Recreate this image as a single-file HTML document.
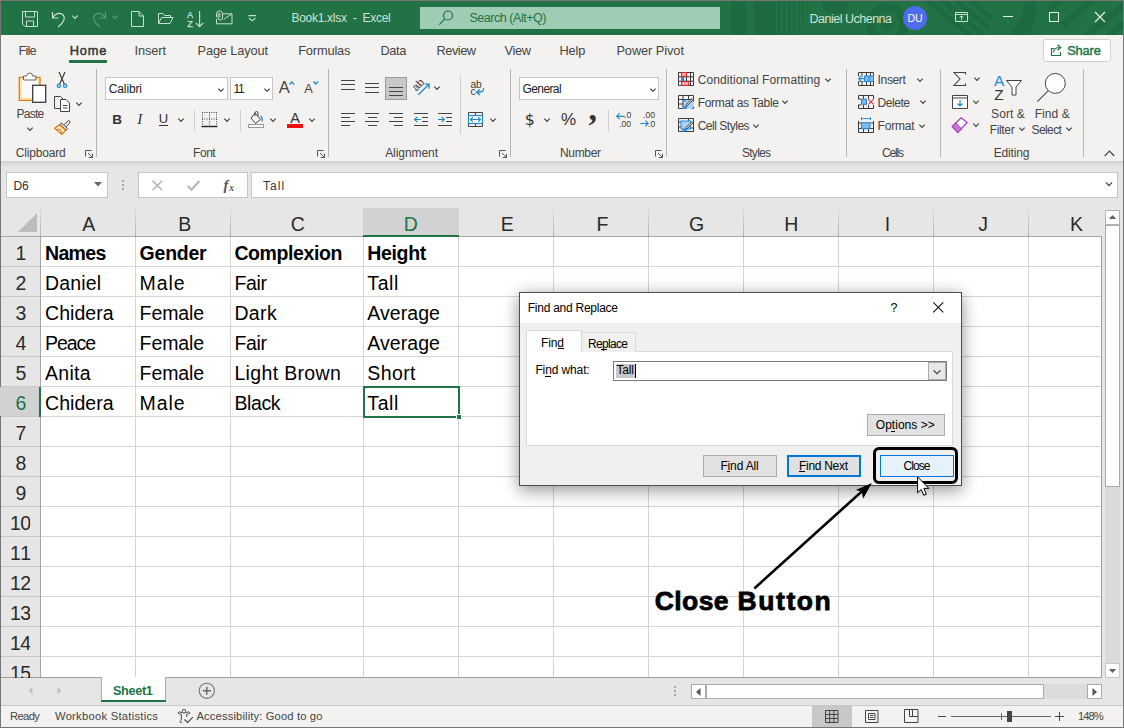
<!DOCTYPE html>
<html lang="en"><head><meta charset="utf-8"><title>Book1.xlsx - Excel</title>
<style>
html,body{margin:0;padding:0;}
body{width:1124px;height:728px;overflow:hidden;position:relative;background:#fff;font-family:"Liberation Sans",sans-serif;}
#app{position:absolute;left:0;top:0;width:1124px;height:728px;overflow:hidden;}
#app div,#app span.t,#app svg.i{position:absolute;box-sizing:border-box;}
span.t{white-space:pre;}
svg.i{overflow:visible;}
#app div.sec{left:0;top:0;width:1124px;height:728px;}
</style></head><body><div id="app">
<div class="sec" id="base-backgrounds">
<div style="left:0px;top:0px;width:1124px;height:728px;background:#e6e6e6;"></div>
<div style="left:0px;top:0px;width:1124px;height:35px;background:#217346;"></div>
<svg class="i" style="left:720px;top:1px;" width="403" height="34" viewBox="0 0 403 34"><defs><clipPath id="tbc"><rect x="0" y="0" width="403" height="34"/></clipPath></defs>
<g clip-path="url(#tbc)" fill="#1e6a40">
<path d="M11 0 h15 v34 h-8 a7 7 0 0 1 -7 -7z M34 0 h22 v34 h-22z"/>
<path d="M58 0 h2.500 v34 h-2.500z M63 0 h2.500 v34 h-2.500z M68 0 h2.200 v34 h-2.200z M73 0 h2 v34 h-2z M78 0 h1.800 v30 h-1.800z M82.500 0 h1.500 v24 h-1.500z M86.500 0 h1.200 v17 h-1.200z M90 0 h1 v10 h-1z"/>
<circle cx="115" cy="0" r="13.600"/>
<circle cx="167.500" cy="22.600" r="16.800" fill="none" stroke="#1e6a40" stroke-width="8.400"/>
<circle cx="167.500" cy="22.600" r="7"/>
<path d="M205 0 l40 34 h8 l-40 -34z M219 0 l40 34 h8 l-40 -34z M233 0 l34 29 l3 -4 l-29 -25z M247 0 l24 20 l2 -5 l-18 -15z"/>
<path d="M305 0 h11 c2 12 -1 24 -7 34 h-20 c9 -9 15 -21 16 -34z"/>
<path d="M326 6 l8 -6 h10 l-13 11z M340 22 l26 -22 h9 l-30 27z M362 34 l41 -33 v8 l-31 25z M385 34 l18 -15 v8 l-8 7z"/>
</g></svg>
<div style="left:0px;top:0px;width:1124px;height:1px;background:#767676;"></div>
<div style="left:0px;top:0px;width:1px;height:728px;background:#767676;"></div>
<div style="left:1123px;top:0px;width:1px;height:728px;background:#767676;"></div>
<div style="left:1px;top:35px;width:1122px;height:126px;background:#f3f2f1;"></div>
<div style="left:1px;top:161px;width:1122px;height:7px;background:linear-gradient(#d0d0d0,#dedede 50%,#e6e6e6);"></div>
</div>
<div class="sec" id="title-bar-content">
<svg class="i" style="left:22px;top:11px;" width="16" height="16" viewBox="0 0 16 16"><path d="M.5 .5 h15 v15 h-12.500 l-2.500-2.500z M3.500 .5 v5.500 h9 v-5.500 M4.500 15.500 v-5.500 h7 v5.500" fill="none" stroke="#c9dfd2" stroke-width="1"/></svg>
<svg class="i" style="left:51px;top:10px;" width="16" height="18" viewBox="0 0 16 18"><path d="M1.5 2 v6 h6 M1.5 8 c2.5-4.5 7-6 10-3.5 c3.5 3 1.5 8 -4.5 12.500" fill="none" stroke="#c9dfd2" stroke-width="1.2"/></svg>
<svg class="i" style="left:70px;top:13px;" width="10" height="8" viewBox="0 0 10 8"><path d="M2.3 2.6 L5 5.4 L7.7 2.6" fill="none" stroke="#c9dfd2" stroke-width="1.2"/></svg>
<svg class="i" style="left:91px;top:10px;" width="16" height="18" viewBox="0 0 16 18"><path d="M14.500 2 v6 h-6 M14.500 8 c-2.500-4.500 -7-6 -10-3.500 c-3.500 3 -1.500 8 4.500 12.500" fill="none" stroke="#5d9a78" stroke-width="1.200"/></svg>
<svg class="i" style="left:110px;top:13px;" width="10" height="8" viewBox="0 0 10 8"><path d="M2.3 2.6 L5 5.4 L7.7 2.6" fill="none" stroke="#5d9a78" stroke-width="1.2"/></svg>
<svg class="i" style="left:131px;top:11px;" width="13" height="16" viewBox="0 0 13 16"><path d="M.5 .5 h7.500 l4.500 4.500 v10.500 h-12z M8 .5 v4.500 h4.500" fill="none" stroke="#c9dfd2" stroke-width="1"/></svg>
<svg class="i" style="left:158px;top:13px;" width="16" height="12" viewBox="0 0 16 12"><path d="M.5 10.500 v-10 h4.500 l1.500 2 h6 v2.500 M.5 10.500 l3-6 h11.500 l-3 6z" fill="none" stroke="#c9dfd2" stroke-width="1"/></svg>
<span class="t" style="left:187.00px;top:8.80px;font-size:9.3px;line-height:12px;letter-spacing:0.000px;color:#c9dfd2;-webkit-text-stroke:.25px #c9dfd2;">A</span>
<span class="t" style="left:187.30px;top:17.80px;font-size:9.3px;line-height:12px;letter-spacing:0.000px;color:#c9dfd2;-webkit-text-stroke:.25px #c9dfd2;">Z</span>
<svg class="i" style="left:195px;top:11px;" width="9" height="16" viewBox="0 0 9 16"><path d="M4.600 0 v15.500 M1 12 l3.600 3.600 l3.600-3.600" fill="none" stroke="#c9dfd2" stroke-width="1.100"/></svg>
<svg class="i" style="left:215px;top:10px;" width="18" height="15" viewBox="0 0 18 15"><path d="M8 3.800 h9 v10 h-15.500 v-5" fill="none" stroke="#c9dfd2" stroke-width="1"/><path d="M8.800 9.300 L17 3.800" fill="none" stroke="#c9dfd2" stroke-width="1"/><path d="M1.500 7 v-3.200 a3 3 0 0 1 6 0 v4 a2.200 2.200 0 0 1 -4.400 0 v-3.800 a.9 .9 0 0 1 1.800 0 v3.500" fill="none" stroke="#c9dfd2" stroke-width="1"/></svg>
<svg class="i" style="left:248px;top:15px;" width="9" height="7" viewBox="0 0 9 7"><path d="M.5 .6 h7.500 M1 3 l3.200 2.800 l3.200-2.800" fill="none" stroke="#c9dfd2" stroke-width="1.100"/></svg>
<span class="t" style="left:291.50px;top:10.10px;font-size:12px;line-height:16px;letter-spacing:-0.290px;color:#cfe2d6;">Book1.xlsx  -  Excel</span>
<div style="left:420px;top:7px;width:300px;height:22px;background:#9fcdb3;"></div>
<svg class="i" style="left:439px;top:11px;" width="14" height="14" viewBox="0 0 14 14"><circle cx="9" cy="4.500" r="4.500" fill="none" stroke="#217346" stroke-width="1.200"/><path d="M5.800 7.800 L.3 13.600" stroke="#217346" stroke-width="1.200"/></svg>
<span class="t" style="left:469.50px;top:9.80px;font-size:12.5px;line-height:16px;letter-spacing:-0.463px;color:#217346;">Search (Alt+Q)</span>
<span class="t" style="left:809.50px;top:11.10px;font-size:12.5px;line-height:16px;letter-spacing:-0.496px;color:#cfe2d6;">Daniel Uchenna</span>
<div style="left:903px;top:6px;width:24px;height:24px;background:#4f6bed;border-radius:50%;"></div>
<span class="t" style="left:907.50px;top:11.00px;font-size:10.5px;line-height:14px;letter-spacing:-0.166px;color:#fff;">DU</span>
<svg class="i" style="left:955px;top:12px;" width="13" height="10" viewBox="0 0 13 10"><path d="M.5 .5 h12 v9 h-12z M.5 2.500 h12" fill="none" stroke="#c9dfd2" stroke-width="1"/><path d="M6.500 8 v-4 M4.500 5.700 l2-2 l2 2" fill="none" stroke="#c9dfd2" stroke-width="1"/></svg>
<div style="left:1003px;top:16px;width:10px;height:1px;background:#e4efe8;"></div>
<div style="left:1049px;top:12px;width:10px;height:10px;border:1px solid #e4efe8;"></div>
<svg class="i" style="left:1095px;top:12px;" width="10" height="10" viewBox="0 0 10 10"><path d="M0 0 L10 10 M10 0 L0 10" stroke="#e4efe8" stroke-width="1.100"/></svg>
</div>
<div class="sec" id="tab-row">
<span class="t" style="left:18.50px;top:41.50px;font-size:12.8px;line-height:17px;letter-spacing:-0.875px;color:#444;">File</span>
<span class="t" style="left:134.50px;top:41.50px;font-size:12.8px;line-height:17px;letter-spacing:-0.103px;color:#444;">Insert</span>
<span class="t" style="left:197.50px;top:41.50px;font-size:12.8px;line-height:17px;letter-spacing:-0.138px;color:#444;">Page Layout</span>
<span class="t" style="left:298.20px;top:41.50px;font-size:12.8px;line-height:17px;letter-spacing:-0.149px;color:#444;">Formulas</span>
<span class="t" style="left:380.40px;top:41.50px;font-size:12.8px;line-height:17px;letter-spacing:-0.379px;color:#444;">Data</span>
<span class="t" style="left:436.60px;top:41.50px;font-size:12.8px;line-height:17px;letter-spacing:-0.514px;color:#444;">Review</span>
<span class="t" style="left:504.50px;top:41.50px;font-size:12.8px;line-height:17px;letter-spacing:-0.338px;color:#444;">View</span>
<span class="t" style="left:559.50px;top:41.50px;font-size:12.8px;line-height:17px;letter-spacing:-0.142px;color:#444;">Help</span>
<span class="t" style="left:616.40px;top:41.50px;font-size:12.8px;line-height:17px;letter-spacing:-0.070px;color:#444;">Power Pivot</span>
<span class="t" style="left:69.70px;top:41.50px;font-size:12.8px;line-height:17px;letter-spacing:0.818px;color:#333;-webkit-text-stroke:.45px #333;">Home</span>
<div style="left:69px;top:60px;width:38px;height:3px;background:#217346;"></div>
<div style="left:1043px;top:39px;width:68px;height:23px;background:#fff;border:1px solid #d2d0ce;border-radius:3px;"></div>
<svg class="i" style="left:1051px;top:44px;" width="12" height="12" viewBox="0 0 12 12"><path d="M3.500 4.500 h-3 v7 h9 v-3.500" fill="none" stroke="#217346" stroke-width="1.200"/><path d="M2.500 8.500 c.5-3.500 3-5 6-5 M6.500 .8 l3.300 2.700 l-3.300 2.700" fill="none" stroke="#217346" stroke-width="1.200"/></svg>
<span class="t" style="left:1067.20px;top:41.50px;font-size:12.8px;line-height:17px;letter-spacing:-0.140px;color:#217346;-webkit-text-stroke:.45px #217346;">Share</span>
</div>
<div class="sec" id="ribbon">
<div style="left:96px;top:69px;width:1px;height:88px;background:#b8b6b4;"></div>
<div style="left:328px;top:69px;width:1px;height:88px;background:#b8b6b4;"></div>
<div style="left:510px;top:69px;width:1px;height:88px;background:#b8b6b4;"></div>
<div style="left:666px;top:69px;width:1px;height:88px;background:#b8b6b4;"></div>
<div style="left:846px;top:69px;width:1px;height:88px;background:#b8b6b4;"></div>
<div style="left:940px;top:69px;width:1px;height:88px;background:#b8b6b4;"></div>
<div style="left:1083px;top:69px;width:1px;height:88px;background:#b8b6b4;"></div>
<div style="left:194px;top:110px;width:1px;height:21px;background:#d0cecc;"></div>
<div style="left:240px;top:110px;width:1px;height:21px;background:#d0cecc;"></div>
<div style="left:460px;top:75px;width:1px;height:59px;background:#d0cecc;"></div>
<div style="left:608px;top:110px;width:1px;height:21px;background:#d0cecc;"></div>
<span class="t" style="left:15.70px;top:145.00px;font-size:12px;line-height:16px;letter-spacing:-0.171px;color:#444;">Clipboard</span>
<span class="t" style="left:193.00px;top:145.00px;font-size:12px;line-height:16px;letter-spacing:-0.437px;color:#444;">Font</span>
<span class="t" style="left:385.20px;top:145.00px;font-size:12px;line-height:16px;letter-spacing:-0.070px;color:#444;">Alignment</span>
<span class="t" style="left:560.00px;top:145.00px;font-size:12px;line-height:16px;letter-spacing:-0.336px;color:#444;">Number</span>
<span class="t" style="left:742.00px;top:145.00px;font-size:12px;line-height:16px;letter-spacing:-0.736px;color:#444;">Styles</span>
<span class="t" style="left:882.00px;top:145.00px;font-size:12px;line-height:16px;letter-spacing:-1.168px;color:#444;">Cells</span>
<span class="t" style="left:993.70px;top:145.00px;font-size:12px;line-height:16px;letter-spacing:-0.165px;color:#444;">Editing</span>
<svg class="i" style="left:85px;top:149.5px;" width="8" height="8" viewBox="0 0 8 8"><path d="M.5 6.500 v-6 h6 M3 3 l4.300 4.300 M7.500 3.800 v3.700 h-3.700" fill="none" stroke="#555" stroke-width="1"/></svg>
<svg class="i" style="left:317px;top:149.5px;" width="8" height="8" viewBox="0 0 8 8"><path d="M.5 6.500 v-6 h6 M3 3 l4.300 4.300 M7.500 3.800 v3.700 h-3.700" fill="none" stroke="#555" stroke-width="1"/></svg>
<svg class="i" style="left:499px;top:149.5px;" width="8" height="8" viewBox="0 0 8 8"><path d="M.5 6.500 v-6 h6 M3 3 l4.300 4.300 M7.500 3.800 v3.700 h-3.700" fill="none" stroke="#555" stroke-width="1"/></svg>
<svg class="i" style="left:655px;top:149.5px;" width="8" height="8" viewBox="0 0 8 8"><path d="M.5 6.500 v-6 h6 M3 3 l4.300 4.300 M7.500 3.800 v3.700 h-3.700" fill="none" stroke="#555" stroke-width="1"/></svg>
<svg class="i" style="left:1104px;top:150px;" width="11" height="7" viewBox="0 0 11 7"><path d="M.7 6 l4.800-4.800 l4.800 4.800" fill="none" stroke="#444" stroke-width="1.200"/></svg>
<svg class="i" style="left:18px;top:72px;" width="29" height="32" viewBox="0 0 29 32"><rect x="1.300" y="5.400" width="20.700" height="23" fill="#fafafa"/>
<path d="M3 27 v-19.900 h17.400 v5 M3 26.700 h11" fill="none" stroke="#fbe2a4" stroke-width="1.900"/>
<path d="M14 28.400 h-12.700 v-23 h20.700 v7.500" fill="none" stroke="#e07a10" stroke-width="1.300"/>
<path d="M5.500 8 v-4 h3.200 a3 3 0 0 1 6 0 h3.200 v4z" fill="#fdfdfd" stroke="#6a6a6a" stroke-width="1"/>
<rect x="14.700" y="13.300" width="13" height="17" fill="#fff" stroke="#3b3b3b" stroke-width="1.300"/></svg>
<span class="t" style="left:16.60px;top:106.00px;font-size:12px;line-height:16px;letter-spacing:-0.797px;color:#444;">Paste</span>
<svg class="i" style="left:25px;top:125px;" width="10" height="8" viewBox="0 0 10 8"><path d="M2.3 2.6 L5 5.4 L7.7 2.6" fill="none" stroke="#444" stroke-width="1.2"/></svg>
<svg class="i" style="left:56px;top:72px;" width="12" height="16" viewBox="0 0 12 16"><path d="M3 0 l5.300 12 M9 0 l-5.300 12" stroke="#3b3b3b" stroke-width="1.200" fill="none"/>
<circle cx="2.900" cy="13.800" r="1.600" fill="none" stroke="#1e8bcd" stroke-width="1.300"/><circle cx="9.100" cy="13.800" r="1.600" fill="none" stroke="#1e8bcd" stroke-width="1.300"/></svg>
<svg class="i" style="left:54px;top:96px;" width="17" height="16" viewBox="0 0 17 16"><path d="M6 12.500 h-5.500 v-12 h6 l3 3" fill="none" stroke="#444" stroke-width="1"/><path d="M6.500 3.500 h5.500 l3.500 3.500 v8.500 h-9z" fill="#fff" stroke="#444" stroke-width="1"/><path d="M9 9.500 h4.500 M9 12 h4.500" stroke="#444" stroke-width="1"/></svg>
<svg class="i" style="left:74px;top:100px;" width="10" height="8" viewBox="0 0 10 8"><path d="M2.3 2.6 L5 5.4 L7.7 2.6" fill="none" stroke="#444" stroke-width="1.2"/></svg>
<svg class="i" style="left:54px;top:120px;" width="17" height="15" viewBox="0 0 17 15"><path d="M10.300 4.700 l3.300-3.600 a1.300 1.300 0 0 1 2 1.700 l-3.200 3.700" fill="#f3f2f1" stroke="#3b3b3b" stroke-width="1"/><path d="M7.300 3 l6.300 5.500 l-1.400 1.600 l-6.300-5.500z" fill="#f3f2f1" stroke="#3b3b3b" stroke-width="1"/>
<path d="M5.600 4.900 l-5 3.300 l7.300 6 l3.800-4z" fill="#fdf0dd" stroke="#e07a10" stroke-width="1.300" stroke-linejoin="round"/><path d="M2.500 9.500 l4 -.5 l1.200 4" fill="none" stroke="#e07a10" stroke-width="1"/></svg>
<div style="left:105px;top:77px;width:123px;height:23px;background:#fff;border:1px solid #c8c6c4;"></div>
<span class="t" style="left:108.80px;top:80.90px;font-size:12px;line-height:16px;letter-spacing:-0.135px;color:#222;">Calibri</span>
<svg class="i" style="left:216px;top:86px;" width="10" height="8" viewBox="0 0 10 8"><path d="M2.3 2.6 L5 5.4 L7.7 2.6" fill="none" stroke="#444" stroke-width="1.2"/></svg>
<div style="left:230px;top:77px;width:43px;height:23px;background:#fff;border:1px solid #c8c6c4;"></div>
<span class="t" style="left:233.60px;top:80.90px;font-size:12px;line-height:16px;letter-spacing:0.000px;color:#222;letter-spacing:-1.3px;">11</span>
<svg class="i" style="left:262px;top:86px;" width="10" height="8" viewBox="0 0 10 8"><path d="M2.3 2.6 L5 5.4 L7.7 2.6" fill="none" stroke="#444" stroke-width="1.2"/></svg>
<span class="t" style="left:278.80px;top:76.60px;font-size:16.5px;line-height:20px;letter-spacing:0.000px;color:#444;">A</span>
<svg class="i" style="left:289px;top:80.5px;" width="6" height="4" viewBox="0 0 6 4"><path d="M.5 3.500 l2.300-2.500 l2.300 2.500" fill="none" stroke="#1e8bcd" stroke-width="1.200"/></svg>
<span class="t" style="left:304.30px;top:80.60px;font-size:12.7px;line-height:16px;letter-spacing:0.000px;color:#444;">A</span>
<svg class="i" style="left:313px;top:80.5px;" width="6" height="4" viewBox="0 0 6 4"><path d="M.5 .5 l2.300 2.500 l2.300-2.500" fill="none" stroke="#1e8bcd" stroke-width="1.200"/></svg>
<span class="t" style="left:112.30px;top:110.70px;font-size:13.5px;line-height:17px;letter-spacing:0.000px;color:#333;font-weight:700;">B</span>
<span class="t" style="left:137.20px;top:109.70px;font-size:15px;line-height:18px;letter-spacing:0.000px;color:#333;font-style:italic;font-family:'Liberation Serif',serif;">I</span>
<span class="t" style="left:158.80px;top:110.20px;font-size:13px;line-height:17px;letter-spacing:0.000px;color:#333;">U</span>
<div style="left:159px;top:125px;width:9px;height:1px;background:#333;"></div>
<svg class="i" style="left:176px;top:116px;" width="10" height="8" viewBox="0 0 10 8"><path d="M2.3 2.6 L5 5.4 L7.7 2.6" fill="none" stroke="#444" stroke-width="1.2"/></svg>
<svg class="i" style="left:201px;top:111px;" width="17" height="17" viewBox="0 0 17 17"><path d="M1 1.500 h15 M1.500 1 v13 M15.500 1 v13 M8.500 1 v13 M1 8 h15" fill="none" stroke="#444" stroke-width="1" stroke-dasharray="1 1.300"/><path d="M.5 15.500 h16" stroke="#222" stroke-width="1.400"/></svg>
<svg class="i" style="left:222px;top:116px;" width="10" height="8" viewBox="0 0 10 8"><path d="M2.3 2.6 L5 5.4 L7.7 2.6" fill="none" stroke="#444" stroke-width="1.2"/></svg>
<svg class="i" style="left:248px;top:111px;" width="17" height="17" viewBox="0 0 17 17"><path d="M7 2 l5.500 6.500 l-5 4 l-4.500-5.500z" fill="none" stroke="#444" stroke-width="1"/><path d="M7 5 v-3 a1.500 1.500 0 0 1 3 0 v3" fill="none" stroke="#444" stroke-width="1"/><path d="M12.500 5 c2 1.500 2 3.500 1.500 5.500" fill="none" stroke="#1e8bcd" stroke-width="1.300"/><rect x=".5" y="13.500" width="15" height="3" fill="#fff" stroke="#999" stroke-width="1"/></svg>
<svg class="i" style="left:268px;top:116px;" width="10" height="8" viewBox="0 0 10 8"><path d="M2.3 2.6 L5 5.4 L7.7 2.6" fill="none" stroke="#444" stroke-width="1.2"/></svg>
<span class="t" style="left:290.30px;top:108.90px;font-size:14.5px;line-height:18px;letter-spacing:0.000px;color:#333;">A</span>
<div style="left:287px;top:124px;width:16px;height:4px;background:#ee1111;"></div>
<svg class="i" style="left:307px;top:116px;" width="10" height="8" viewBox="0 0 10 8"><path d="M2.3 2.6 L5 5.4 L7.7 2.6" fill="none" stroke="#444" stroke-width="1.2"/></svg>
<div style="left:341px;top:80px;width:14px;height:1px;background:#444;"></div>
<div style="left:341px;top:84px;width:14px;height:1px;background:#444;"></div>
<div style="left:341px;top:89px;width:14px;height:1px;background:#444;"></div>
<div style="left:365px;top:83px;width:14px;height:1px;background:#444;"></div>
<div style="left:365px;top:87px;width:14px;height:1px;background:#444;"></div>
<div style="left:365px;top:92px;width:14px;height:1px;background:#444;"></div>
<div style="left:385px;top:77px;width:22px;height:23px;background:#c8c8c8;border:1px solid #9a9a9a;"></div>
<div style="left:389px;top:87px;width:14px;height:1px;background:#444;"></div>
<div style="left:389px;top:91px;width:14px;height:1px;background:#444;"></div>
<div style="left:389px;top:95px;width:14px;height:1px;background:#444;"></div>
<div style="left:341px;top:113px;width:14px;height:1px;background:#444;"></div>
<div style="left:341px;top:117px;width:9px;height:1px;background:#444;"></div>
<div style="left:341px;top:121px;width:14px;height:1px;background:#444;"></div>
<div style="left:341px;top:125px;width:9px;height:1px;background:#444;"></div>
<div style="left:365px;top:113px;width:14px;height:1px;background:#444;"></div>
<div style="left:368px;top:117px;width:9px;height:1px;background:#444;"></div>
<div style="left:365px;top:121px;width:14px;height:1px;background:#444;"></div>
<div style="left:368px;top:125px;width:9px;height:1px;background:#444;"></div>
<div style="left:389px;top:113px;width:14px;height:1px;background:#444;"></div>
<div style="left:394px;top:117px;width:9px;height:1px;background:#444;"></div>
<div style="left:389px;top:121px;width:14px;height:1px;background:#444;"></div>
<div style="left:394px;top:125px;width:9px;height:1px;background:#444;"></div>
<svg class="i" style="left:412px;top:79px;" width="18" height="17" viewBox="0 0 18 17"><text x="0" y="0" font-size="11" fill="#3b3b3b" transform="translate(4.600 12.700) rotate(-47)" font-family="Liberation Sans, sans-serif">ab</text><path d="M6.200 15.700 L16.800 5.500 M12.600 5.200 h4.500 v4.500" fill="none" stroke="#1e8bcd" stroke-width="1.300"/></svg>
<svg class="i" style="left:432px;top:84px;" width="10" height="8" viewBox="0 0 10 8"><path d="M2.3 2.6 L5 5.4 L7.7 2.6" fill="none" stroke="#444" stroke-width="1.2"/></svg>
<div style="left:414px;top:113px;width:14px;height:1px;background:#444;"></div>
<div style="left:414px;top:125px;width:14px;height:1px;background:#444;"></div>
<div style="left:422px;top:117px;width:6px;height:1px;background:#444;"></div>
<div style="left:422px;top:121px;width:6px;height:1px;background:#444;"></div>
<svg class="i" style="left:414px;top:116px;" width="7" height="7" viewBox="0 0 7 7"><path d="M7 3.500 h-6 M3.300 .8 l-2.700 2.700 l2.700 2.700" fill="none" stroke="#1e8bcd" stroke-width="1.200"/></svg>
<div style="left:438px;top:113px;width:14px;height:1px;background:#444;"></div>
<div style="left:438px;top:125px;width:14px;height:1px;background:#444;"></div>
<div style="left:446px;top:117px;width:6px;height:1px;background:#444;"></div>
<div style="left:446px;top:121px;width:6px;height:1px;background:#444;"></div>
<svg class="i" style="left:438px;top:116px;" width="7" height="7" viewBox="0 0 7 7"><path d="M0 3.500 h6 M3.700 .8 l2.700 2.700 l-2.700 2.700" fill="none" stroke="#1e8bcd" stroke-width="1.200"/></svg>
<svg class="i" style="left:470px;top:79px;" width="15" height="17" viewBox="0 0 15 17"><text x=".4" y="8.700" font-size="10.300" fill="#3b3b3b" font-family="Liberation Sans, sans-serif">ab</text><text x=".4" y="15.700" font-size="10.300" fill="#3b3b3b" font-family="Liberation Sans, sans-serif">c</text><path d="M13.500 9 c.8 3 -2 4.500 -6.500 4.200 M9.800 10.400 l-3.300 2.800 l3.300 2.800" fill="none" stroke="#1e8bcd" stroke-width="1.300"/></svg>
<svg class="i" style="left:468px;top:112px;" width="15" height="15" viewBox="0 0 15 15"><path d="M.5 .5 h14 v14 h-14z M7.500 .5 v3 M7.500 11.500 v3" fill="none" stroke="#444" stroke-width="1"/><rect x=".5" y="3.500" width="14" height="8" fill="#fff" stroke="#1e8bcd" stroke-width="1.200"/><path d="M2.500 7.500 h10 M4.800 5.300 l-2.300 2.200 l2.300 2.200 M10.200 5.300 l2.300 2.200 l-2.300 2.200" fill="none" stroke="#1e8bcd" stroke-width="1.200"/></svg>
<svg class="i" style="left:488px;top:116px;" width="10" height="8" viewBox="0 0 10 8"><path d="M2.3 2.6 L5 5.4 L7.7 2.6" fill="none" stroke="#444" stroke-width="1.2"/></svg>
<div style="left:519px;top:77px;width:140px;height:23px;background:#fff;border:1px solid #c8c6c4;"></div>
<span class="t" style="left:522.50px;top:80.90px;font-size:12px;line-height:16px;letter-spacing:-0.599px;color:#222;">General</span>
<svg class="i" style="left:648px;top:86px;" width="10" height="8" viewBox="0 0 10 8"><path d="M2.3 2.6 L5 5.4 L7.7 2.6" fill="none" stroke="#444" stroke-width="1.2"/></svg>
<span class="t" style="left:524.80px;top:109.70px;font-size:15.8px;line-height:19px;letter-spacing:0.000px;color:#333;font-family:'DejaVu Sans','Liberation Sans',sans-serif;">$</span>
<svg class="i" style="left:542px;top:116px;" width="10" height="8" viewBox="0 0 10 8"><path d="M2.3 2.6 L5 5.4 L7.7 2.6" fill="none" stroke="#444" stroke-width="1.2"/></svg>
<span class="t" style="left:561.00px;top:109.00px;font-size:17px;line-height:21px;letter-spacing:0.000px;color:#333;">%</span>
<span class="t" style="left:588.60px;top:89.00px;font-size:34px;line-height:39px;letter-spacing:0.000px;color:#333;font-weight:700;font-family:'Liberation Serif',serif;">,</span>
<svg class="i" style="left:616px;top:111px;" width="16" height="17" viewBox="0 0 16 17"><text x="8" y="7.400" font-size="8.600" fill="#3b3b3b" font-family="Liberation Sans, sans-serif">.0</text><text x="3.200" y="15.800" font-size="8.600" fill="#3b3b3b" font-family="Liberation Sans, sans-serif">.00</text><path d="M8.700 5.300 h-8 M3.600 2.400 l-2.900 2.900 l2.900 2.900" fill="none" stroke="#1e8bcd" stroke-width="1.200"/></svg>
<svg class="i" style="left:640px;top:111px;" width="16" height="17" viewBox="0 0 16 17"><text x="3" y="7.400" font-size="8.600" fill="#3b3b3b" font-family="Liberation Sans, sans-serif">.00</text><text x="8" y="15.800" font-size="8.600" fill="#3b3b3b" font-family="Liberation Sans, sans-serif">.0</text><path d="M.2 12.500 h8 M5.300 9.600 l2.900 2.900 l-2.900 2.900" fill="none" stroke="#1e8bcd" stroke-width="1.200"/></svg>
<svg class="i" style="left:678px;top:72px;" width="16" height="14" viewBox="0 0 16 14"><path d="M.5 .5 h15 v13 h-15z M.5 4.8 h15 M.5 9.2 h15 M4 .5 v13 M8.500 .5 v13 M12.500 .5 v13" fill="none" stroke="#3b3b3b" stroke-width="1"/><rect x="3.600" y=".5" width="5" height="4" fill="#f7a6ad" stroke="#e0212c" stroke-width="1"/><rect x="3.600" y="9.500" width="7" height="4" fill="#f7a6ad" stroke="#e0212c" stroke-width="1"/><rect x="3.200" y="5" width="3" height="4" fill="#2b88d8"/></svg>
<span class="t" style="left:697.70px;top:71.80px;font-size:12px;line-height:16px;letter-spacing:0.084px;color:#444;">Conditional Formatting</span>
<svg class="i" style="left:823px;top:76px;" width="10" height="8" viewBox="0 0 10 8"><path d="M2.3 2.6 L5 5.4 L7.7 2.6" fill="none" stroke="#444" stroke-width="1.2"/></svg>
<svg class="i" style="left:678px;top:95px;" width="16" height="14" viewBox="0 0 16 14"><path d="M.5 13.500 v-13 h15 v4 M.5 4.500 h15 M.5 9 h5 M5 .5 v13 M10.500 .5 v4 M.5 13.500 h4" fill="none" stroke="#3b3b3b" stroke-width="1"/><rect x="6.500" y="5" width="9" height="8.500" fill="#a9d3f2"/><path d="M6.500 7 v-2 h2 M13.500 5 h2 v2 M15.500 11.500 v2 h-2 M8.500 13.500 h-2 v-2" fill="none" stroke="#2b88d8" stroke-width="1.100"/><path d="M15.300 4.800 l-6.300 6 l-1.200 -1.200 l6.300 -6z" fill="#d8d8d8" stroke="#3b3b3b" stroke-width=".9"/><path d="M8.300 10.300 c-1.500 .2 -2 1.800 -4.500 3.300 c2.500 .8 5 -.3 5.700 -2.200z" fill="#2b88d8"/></svg>
<span class="t" style="left:697.70px;top:94.90px;font-size:12px;line-height:16px;letter-spacing:-0.323px;color:#444;">Format as Table</span>
<svg class="i" style="left:780px;top:98px;" width="10" height="8" viewBox="0 0 10 8"><path d="M2.3 2.6 L5 5.4 L7.7 2.6" fill="none" stroke="#444" stroke-width="1.2"/></svg>
<svg class="i" style="left:678px;top:118px;" width="16" height="14" viewBox="0 0 16 14"><path d="M.5 .5 h15 v13 h-15z M.5 4 h3 M.5 9 h3 M12.500 10 h3 M5 10.500 v3 M10.500 .5 v3" fill="none" stroke="#3b3b3b" stroke-width="1"/><rect x="3" y="3" width="9.500" height="8" fill="#a9d3f2" stroke="#2b88d8" stroke-width="1"/><path d="M15.300 4.800 l-6.300 6 l-1.200 -1.200 l6.300 -6z" fill="#d8d8d8" stroke="#3b3b3b" stroke-width=".9"/><path d="M8.300 10.300 c-1.500 .2 -2 1.800 -4.500 3.300 c2.500 .8 5 -.3 5.700 -2.200z" fill="#2b88d8"/></svg>
<span class="t" style="left:697.70px;top:117.80px;font-size:12px;line-height:16px;letter-spacing:-0.479px;color:#444;">Cell Styles</span>
<svg class="i" style="left:751px;top:122px;" width="10" height="8" viewBox="0 0 10 8"><path d="M2.3 2.6 L5 5.4 L7.7 2.6" fill="none" stroke="#444" stroke-width="1.2"/></svg>
<svg class="i" style="left:858px;top:72px;" width="16" height="14" viewBox="0 0 16 14"><path d="M.5 .5 h15 v13 h-15z M.5 4.8 h15 M.5 9.2 h15 M4 .5 v13 M8.500 .5 v13 M12.500 .5 v13" fill="none" stroke="#3b3b3b" stroke-width="1"/><rect x="6" y="4" width="9.500" height="5.500" fill="#7db9ec"/><path d="M6.500 4 v5.500 M11 4 v5.500 M6 4 h9.500 M6 9.500 h9.500" stroke="#2b88d8" stroke-width="1" fill="none"/><rect x="0" y="4.200" width="6" height="5" fill="#f3f2f1"/><path d="M7 6.700 h-6.300 M3.400 4 l-2.700 2.700 l2.700 2.700" fill="none" stroke="#2b88d8" stroke-width="1.200"/></svg>
<span class="t" style="left:877.60px;top:71.80px;font-size:12px;line-height:16px;letter-spacing:-0.362px;color:#444;">Insert</span>
<svg class="i" style="left:915px;top:76px;" width="10" height="8" viewBox="0 0 10 8"><path d="M2.3 2.6 L5 5.4 L7.7 2.6" fill="none" stroke="#444" stroke-width="1.2"/></svg>
<svg class="i" style="left:858px;top:95px;" width="16" height="14" viewBox="0 0 16 14"><path d="M.5 4 v-3.500 h15 v3.500 M.5 10 v3.500 h15 v-3.500 M5.500 .5 v3.500 M10.500 .5 v3.500 M5.500 10 v3.500 M10.500 10 v3.500 M0 4 h3 M0 10 h3" fill="none" stroke="#3b3b3b" stroke-width="1"/><rect x="3.500" y="4.300" width="5" height="5" fill="#7db9ec" stroke="#2b88d8" stroke-width="1.100"/><path d="M10.500 4.300 l5 5 M15.500 4.300 l-5 5" stroke="#e8373e" stroke-width="1.200"/></svg>
<span class="t" style="left:877.60px;top:94.90px;font-size:12px;line-height:16px;letter-spacing:-0.458px;color:#444;">Delete</span>
<svg class="i" style="left:918px;top:98px;" width="10" height="8" viewBox="0 0 10 8"><path d="M2.3 2.6 L5 5.4 L7.7 2.6" fill="none" stroke="#444" stroke-width="1.2"/></svg>
<svg class="i" style="left:858px;top:118px;" width="16" height="15" viewBox="0 0 16 15"><path d="M.5 3 v11.500 h15 v-11.500 M.5 10.500 h15 M.5 5 h3 M12.500 5 h3 M5.500 10.500 v4 M10.500 10.500 v4" fill="none" stroke="#3b3b3b" stroke-width="1"/><rect x="3.500" y="4.700" width="8.500" height="6" fill="#7db9ec" stroke="#2b88d8" stroke-width="1.100"/><path d="M3.500 .6 h9 M3.500 -.8 v3 M12.500 -.8 v3" stroke="#2b88d8" stroke-width="1" fill="none"/></svg>
<span class="t" style="left:877.60px;top:117.80px;font-size:12px;line-height:16px;letter-spacing:-0.201px;color:#444;">Format</span>
<svg class="i" style="left:917px;top:122px;" width="10" height="8" viewBox="0 0 10 8"><path d="M2.3 2.6 L5 5.4 L7.7 2.6" fill="none" stroke="#444" stroke-width="1.2"/></svg>
<svg class="i" style="left:953px;top:72px;" width="14" height="14" viewBox="0 0 14 14"><path d="M12.500 2.500 v-2 h-11.500 l6 6.500 l-6 6.500 h11.500 v-2" fill="none" stroke="#444" stroke-width="1.100"/></svg>
<svg class="i" style="left:972px;top:75px;" width="10" height="8" viewBox="0 0 10 8"><path d="M2.3 2.6 L5 5.4 L7.7 2.6" fill="none" stroke="#444" stroke-width="1.2"/></svg>
<svg class="i" style="left:952px;top:95px;" width="16" height="14" viewBox="0 0 16 14"><path d="M.5 .5 h15 v13 h-15z M.5 3 h15" fill="#fff" stroke="#444" stroke-width="1"/><path d="M8 5 v6 M5.500 8.500 l2.500 2.500 l2.500-2.500" fill="none" stroke="#1e8bcd" stroke-width="1.200"/></svg>
<svg class="i" style="left:971px;top:98px;" width="10" height="8" viewBox="0 0 10 8"><path d="M2.3 2.6 L5 5.4 L7.7 2.6" fill="none" stroke="#444" stroke-width="1.2"/></svg>
<svg class="i" style="left:951px;top:117px;" width="17" height="16" viewBox="0 0 17 16"><path d="M10.200 .8 l6 4.700 l-9.500 10 l-5.500-6z" fill="#fbfbfb" stroke="#a33fb5" stroke-width="1.200" stroke-linejoin="round"/><path d="M4.700 6 l6.200 6.200 l-4.200 3.300 l-5.500-6z" fill="#c872d8" stroke="#a33fb5" stroke-width="1" stroke-linejoin="round"/></svg>
<svg class="i" style="left:971px;top:121px;" width="10" height="8" viewBox="0 0 10 8"><path d="M2.3 2.6 L5 5.4 L7.7 2.6" fill="none" stroke="#444" stroke-width="1.2"/></svg>
<span class="t" style="left:994.00px;top:70.60px;font-size:15.5px;line-height:19px;letter-spacing:0.000px;color:#1e8bcd;">A</span>
<span class="t" style="left:994.20px;top:84.60px;font-size:15.5px;line-height:19px;letter-spacing:0.000px;color:#333;">Z</span>
<svg class="i" style="left:1006px;top:80px;" width="16" height="16" viewBox="0 0 16 16"><path d="M.5 .5 h15 l-5.500 6.500 v8 h-4 v-8z" fill="#fff" stroke="#444" stroke-width="1"/></svg>
<span class="t" style="left:991.10px;top:106.00px;font-size:12px;line-height:16px;letter-spacing:0.071px;color:#444;">Sort &amp;</span>
<span class="t" style="left:989.70px;top:122.00px;font-size:12px;line-height:16px;letter-spacing:-0.333px;color:#444;">Filter</span>
<svg class="i" style="left:1017px;top:125px;" width="10" height="8" viewBox="0 0 10 8"><path d="M2.3 2.6 L5 5.4 L7.7 2.6" fill="none" stroke="#444" stroke-width="1.2"/></svg>
<svg class="i" style="left:1037px;top:72px;" width="30" height="30" viewBox="0 0 30 30"><circle cx="18.300" cy="11.400" r="10" fill="#fdfdfd" stroke="#444" stroke-width="1"/><path d="M11.300 18.600 L.3 29.600" stroke="#444" stroke-width="1.100"/></svg>
<span class="t" style="left:1034.70px;top:106.00px;font-size:12px;line-height:16px;letter-spacing:0.063px;color:#444;">Find &amp;</span>
<span class="t" style="left:1031.50px;top:122.00px;font-size:12px;line-height:16px;letter-spacing:-0.590px;color:#444;">Select</span>
<svg class="i" style="left:1064px;top:125px;" width="10" height="8" viewBox="0 0 10 8"><path d="M2.3 2.6 L5 5.4 L7.7 2.6" fill="none" stroke="#444" stroke-width="1.2"/></svg>
</div>
<div class="sec" id="formula-bar">
<div style="left:6px;top:172px;width:102px;height:26px;background:#fff;border:1px solid #c6c6c6;"></div>
<span class="t" style="left:13.40px;top:177.80px;font-size:12px;line-height:16px;letter-spacing:-0.140px;color:#333;">D6</span>
<svg class="i" style="left:94px;top:182px;" width="8" height="5" viewBox="0 0 8 5"><path d="M0 0 h8 l-4 4.500z" fill="#666"/></svg>
<div style="left:122px;top:180px;width:2px;height:2px;background:#a8a8a8;"></div>
<div style="left:122px;top:184px;width:2px;height:2px;background:#a8a8a8;"></div>
<div style="left:122px;top:188px;width:2px;height:2px;background:#a8a8a8;"></div>
<div style="left:138px;top:172px;width:110px;height:26px;background:#fff;border:1px solid #c6c6c6;"></div>
<svg class="i" style="left:152px;top:180px;" width="11" height="11" viewBox="0 0 11 11"><path d="M.5 .8 L10.200 10.200 M10.200 .8 L.5 10.200" stroke="#b4b4b4" stroke-width="1.600"/></svg>
<svg class="i" style="left:187px;top:180px;" width="13" height="11" viewBox="0 0 13 11"><path d="M.8 6 L4.500 9.800 L12.300 1" fill="none" stroke="#b8b8b8" stroke-width="2.100"/></svg>
<span class="t" style="left:223.50px;top:176.00px;font-size:14.5px;line-height:18px;letter-spacing:0.000px;color:#555;font-weight:700;font-style:italic;font-family:'Liberation Serif',serif;">f</span>
<span class="t" style="left:229.30px;top:181.60px;font-size:9.5px;line-height:12px;letter-spacing:0.000px;color:#555;font-weight:700;font-style:italic;font-family:'Liberation Serif',serif;">x</span>
<div style="left:251px;top:172px;width:867px;height:26px;background:#fff;border:1px solid #c6c6c6;"></div>
<span class="t" style="left:262.90px;top:177.80px;font-size:12px;line-height:16px;letter-spacing:1.131px;color:#333;">Tall</span>
<svg class="i" style="left:1104px;top:180px;" width="10" height="8" viewBox="0 0 10 8"><path d="M2.0 2.5 L5 5.5 L8.0 2.5" fill="none" stroke="#555" stroke-width="1.4"/></svg>
</div>
<div class="sec" id="grid">
<div style="left:41px;top:237px;width:1060px;height:440px;background:#fff;"></div>
<div style="left:0px;top:387px;width:40px;height:29px;background:#d2d2d2;"></div>
<div style="left:40px;top:208px;width:1px;height:28px;background:linear-gradient(#e0e0e0,#b0b0b0);"></div>
<div style="left:135px;top:208px;width:1px;height:28px;background:linear-gradient(#e0e0e0,#b0b0b0);"></div>
<div style="left:230px;top:208px;width:1px;height:28px;background:linear-gradient(#e0e0e0,#b0b0b0);"></div>
<div style="left:363px;top:208px;width:1px;height:28px;background:linear-gradient(#e0e0e0,#b0b0b0);"></div>
<div style="left:458px;top:208px;width:1px;height:28px;background:linear-gradient(#e0e0e0,#b0b0b0);"></div>
<div style="left:553px;top:208px;width:1px;height:28px;background:linear-gradient(#e0e0e0,#b0b0b0);"></div>
<div style="left:648px;top:208px;width:1px;height:28px;background:linear-gradient(#e0e0e0,#b0b0b0);"></div>
<div style="left:743px;top:208px;width:1px;height:28px;background:linear-gradient(#e0e0e0,#b0b0b0);"></div>
<div style="left:838px;top:208px;width:1px;height:28px;background:linear-gradient(#e0e0e0,#b0b0b0);"></div>
<div style="left:933px;top:208px;width:1px;height:28px;background:linear-gradient(#e0e0e0,#b0b0b0);"></div>
<div style="left:1028px;top:208px;width:1px;height:28px;background:linear-gradient(#e0e0e0,#b0b0b0);"></div>
<div style="left:1px;top:266px;width:39px;height:1px;background:#c8c8c8;"></div>
<div style="left:1px;top:296px;width:39px;height:1px;background:#c8c8c8;"></div>
<div style="left:1px;top:326px;width:39px;height:1px;background:#c8c8c8;"></div>
<div style="left:1px;top:356px;width:39px;height:1px;background:#c8c8c8;"></div>
<div style="left:1px;top:386px;width:39px;height:1px;background:#c8c8c8;"></div>
<div style="left:1px;top:416px;width:39px;height:1px;background:#c8c8c8;"></div>
<div style="left:1px;top:446px;width:39px;height:1px;background:#c8c8c8;"></div>
<div style="left:1px;top:476px;width:39px;height:1px;background:#c8c8c8;"></div>
<div style="left:1px;top:506px;width:39px;height:1px;background:#c8c8c8;"></div>
<div style="left:1px;top:536px;width:39px;height:1px;background:#c8c8c8;"></div>
<div style="left:1px;top:566px;width:39px;height:1px;background:#c8c8c8;"></div>
<div style="left:1px;top:596px;width:39px;height:1px;background:#c8c8c8;"></div>
<div style="left:1px;top:626px;width:39px;height:1px;background:#c8c8c8;"></div>
<div style="left:1px;top:656px;width:39px;height:1px;background:#c8c8c8;"></div>
<div style="left:363px;top:208px;width:96px;height:28px;background:#d2d2d2;"></div>
<div style="left:1px;top:236px;width:1100px;height:1px;background:#a6a6a6;"></div>
<div style="left:40px;top:237px;width:1px;height:440px;background:#a6a6a6;"></div>
<div style="left:135px;top:237px;width:1px;height:440px;background:#d4d4d4;"></div>
<div style="left:230px;top:237px;width:1px;height:440px;background:#d4d4d4;"></div>
<div style="left:363px;top:237px;width:1px;height:440px;background:#d4d4d4;"></div>
<div style="left:458px;top:237px;width:1px;height:440px;background:#d4d4d4;"></div>
<div style="left:553px;top:237px;width:1px;height:440px;background:#d4d4d4;"></div>
<div style="left:648px;top:237px;width:1px;height:440px;background:#d4d4d4;"></div>
<div style="left:743px;top:237px;width:1px;height:440px;background:#d4d4d4;"></div>
<div style="left:838px;top:237px;width:1px;height:440px;background:#d4d4d4;"></div>
<div style="left:933px;top:237px;width:1px;height:440px;background:#d4d4d4;"></div>
<div style="left:1028px;top:237px;width:1px;height:440px;background:#d4d4d4;"></div>
<div style="left:41px;top:266px;width:1060px;height:1px;background:#d4d4d4;"></div>
<div style="left:41px;top:296px;width:1060px;height:1px;background:#d4d4d4;"></div>
<div style="left:41px;top:326px;width:1060px;height:1px;background:#d4d4d4;"></div>
<div style="left:41px;top:356px;width:1060px;height:1px;background:#d4d4d4;"></div>
<div style="left:41px;top:386px;width:1060px;height:1px;background:#d4d4d4;"></div>
<div style="left:41px;top:416px;width:1060px;height:1px;background:#d4d4d4;"></div>
<div style="left:41px;top:446px;width:1060px;height:1px;background:#d4d4d4;"></div>
<div style="left:41px;top:476px;width:1060px;height:1px;background:#d4d4d4;"></div>
<div style="left:41px;top:506px;width:1060px;height:1px;background:#d4d4d4;"></div>
<div style="left:41px;top:536px;width:1060px;height:1px;background:#d4d4d4;"></div>
<div style="left:41px;top:566px;width:1060px;height:1px;background:#d4d4d4;"></div>
<div style="left:41px;top:596px;width:1060px;height:1px;background:#d4d4d4;"></div>
<div style="left:41px;top:626px;width:1060px;height:1px;background:#d4d4d4;"></div>
<div style="left:41px;top:656px;width:1060px;height:1px;background:#d4d4d4;"></div>
<div style="left:1101px;top:236px;width:1px;height:442px;background:#9e9e9e;"></div>
<div style="left:1px;top:677px;width:1101px;height:1px;background:#9e9e9e;"></div>
<svg class="i" style="left:18px;top:213px;" width="20" height="20" viewBox="0 0 20 20"><path d="M19 0 V19 H0z" fill="#bcbcbc"/></svg>
<div style="left:363px;top:235px;width:96px;height:2px;background:#217346;"></div>
<div style="left:39px;top:387px;width:2px;height:30px;background:#217346;"></div>
<span class="t" style="left:82.25px;top:212.00px;font-size:19.5px;line-height:24px;letter-spacing:0.000px;color:#2b2b2b;">A</span>
<span class="t" style="left:178.25px;top:212.00px;font-size:19.5px;line-height:24px;letter-spacing:0.000px;color:#2b2b2b;">B</span>
<span class="t" style="left:290.75px;top:212.00px;font-size:19.5px;line-height:24px;letter-spacing:0.000px;color:#2b2b2b;">C</span>
<span class="t" style="left:403.75px;top:212.00px;font-size:19.5px;line-height:24px;letter-spacing:0.000px;color:#217346;">D</span>
<span class="t" style="left:500.75px;top:212.00px;font-size:19.5px;line-height:24px;letter-spacing:0.000px;color:#2b2b2b;">E</span>
<span class="t" style="left:596.50px;top:212.00px;font-size:19.5px;line-height:24px;letter-spacing:0.000px;color:#2b2b2b;">F</span>
<span class="t" style="left:689.00px;top:212.00px;font-size:19.5px;line-height:24px;letter-spacing:0.000px;color:#2b2b2b;">G</span>
<span class="t" style="left:784.25px;top:212.00px;font-size:19.5px;line-height:24px;letter-spacing:0.000px;color:#2b2b2b;">H</span>
<span class="t" style="left:884.75px;top:212.00px;font-size:19.5px;line-height:24px;letter-spacing:0.000px;color:#2b2b2b;">I</span>
<span class="t" style="left:978.25px;top:212.00px;font-size:19.5px;line-height:24px;letter-spacing:0.000px;color:#2b2b2b;">J</span>
<span class="t" style="left:1070.00px;top:212.00px;font-size:19.5px;line-height:24px;letter-spacing:0.000px;color:#2b2b2b;">K</span>
<span class="t" style="left:15.50px;top:241.00px;font-size:19.5px;line-height:24px;letter-spacing:0.000px;color:#2b2b2b;clip-path:inset(0 0 0px 0);">1</span>
<span class="t" style="left:15.50px;top:271.00px;font-size:19.5px;line-height:24px;letter-spacing:0.000px;color:#2b2b2b;clip-path:inset(0 0 0px 0);">2</span>
<span class="t" style="left:15.50px;top:301.00px;font-size:19.5px;line-height:24px;letter-spacing:0.000px;color:#2b2b2b;clip-path:inset(0 0 0px 0);">3</span>
<span class="t" style="left:15.50px;top:331.00px;font-size:19.5px;line-height:24px;letter-spacing:0.000px;color:#2b2b2b;clip-path:inset(0 0 0px 0);">4</span>
<span class="t" style="left:15.50px;top:361.00px;font-size:19.5px;line-height:24px;letter-spacing:0.000px;color:#2b2b2b;clip-path:inset(0 0 0px 0);">5</span>
<span class="t" style="left:15.50px;top:391.00px;font-size:19.5px;line-height:24px;letter-spacing:0.000px;color:#217346;clip-path:inset(0 0 0px 0);">6</span>
<span class="t" style="left:15.50px;top:421.00px;font-size:19.5px;line-height:24px;letter-spacing:0.000px;color:#2b2b2b;clip-path:inset(0 0 0px 0);">7</span>
<span class="t" style="left:15.50px;top:451.00px;font-size:19.5px;line-height:24px;letter-spacing:0.000px;color:#2b2b2b;clip-path:inset(0 0 0px 0);">8</span>
<span class="t" style="left:15.50px;top:481.00px;font-size:19.5px;line-height:24px;letter-spacing:0.000px;color:#2b2b2b;clip-path:inset(0 0 0px 0);">9</span>
<span class="t" style="left:10.00px;top:511.00px;font-size:19.5px;line-height:24px;letter-spacing:-0.691px;color:#2b2b2b;clip-path:inset(0 0 0px 0);">10</span>
<span class="t" style="left:10.00px;top:541.00px;font-size:19.5px;line-height:24px;letter-spacing:0.757px;color:#2b2b2b;clip-path:inset(0 0 0px 0);">11</span>
<span class="t" style="left:10.00px;top:571.00px;font-size:19.5px;line-height:24px;letter-spacing:-0.691px;color:#2b2b2b;clip-path:inset(0 0 0px 0);">12</span>
<span class="t" style="left:10.00px;top:601.00px;font-size:19.5px;line-height:24px;letter-spacing:-0.691px;color:#2b2b2b;clip-path:inset(0 0 0px 0);">13</span>
<span class="t" style="left:10.00px;top:631.00px;font-size:19.5px;line-height:24px;letter-spacing:-0.691px;color:#2b2b2b;clip-path:inset(0 0 0px 0);">14</span>
<span class="t" style="left:10.00px;top:661.00px;font-size:19.5px;line-height:24px;letter-spacing:-0.691px;color:#2b2b2b;clip-path:inset(0 0 0px 0);">15</span>
<span class="t" style="left:45.00px;top:241.00px;font-size:19.5px;line-height:24px;letter-spacing:-0.664px;color:#000;font-weight:700;">Names</span>
<span class="t" style="left:139.60px;top:241.00px;font-size:19.5px;line-height:24px;letter-spacing:-0.234px;color:#000;font-weight:700;">Gender</span>
<span class="t" style="left:234.40px;top:241.00px;font-size:19.5px;line-height:24px;letter-spacing:-0.388px;color:#000;font-weight:700;">Complexion</span>
<span class="t" style="left:367.30px;top:241.00px;font-size:19.5px;line-height:24px;letter-spacing:-0.353px;color:#000;font-weight:700;">Height</span>
<span class="t" style="left:45.00px;top:271.00px;font-size:19.5px;line-height:24px;letter-spacing:0.183px;color:#000;">Daniel</span>
<span class="t" style="left:139.60px;top:271.00px;font-size:19.5px;line-height:24px;letter-spacing:0.877px;color:#000;">Male</span>
<span class="t" style="left:234.40px;top:271.00px;font-size:19.5px;line-height:24px;letter-spacing:-0.361px;color:#000;">Fair</span>
<span class="t" style="left:367.30px;top:271.00px;font-size:19.5px;line-height:24px;letter-spacing:0.613px;color:#000;">Tall</span>
<span class="t" style="left:45.00px;top:301.00px;font-size:19.5px;line-height:24px;letter-spacing:0.051px;color:#000;">Chidera</span>
<span class="t" style="left:139.60px;top:301.00px;font-size:19.5px;line-height:24px;letter-spacing:-0.105px;color:#000;">Female</span>
<span class="t" style="left:234.40px;top:301.00px;font-size:19.5px;line-height:24px;letter-spacing:0.376px;color:#000;">Dark</span>
<span class="t" style="left:367.30px;top:301.00px;font-size:19.5px;line-height:24px;letter-spacing:0.053px;color:#000;">Average</span>
<span class="t" style="left:45.00px;top:331.00px;font-size:19.5px;line-height:24px;letter-spacing:-1.073px;color:#000;">Peace</span>
<span class="t" style="left:139.60px;top:331.00px;font-size:19.5px;line-height:24px;letter-spacing:-0.105px;color:#000;">Female</span>
<span class="t" style="left:234.40px;top:331.00px;font-size:19.5px;line-height:24px;letter-spacing:-0.361px;color:#000;">Fair</span>
<span class="t" style="left:367.30px;top:331.00px;font-size:19.5px;line-height:24px;letter-spacing:0.053px;color:#000;">Average</span>
<span class="t" style="left:45.00px;top:361.00px;font-size:19.5px;line-height:24px;letter-spacing:0.263px;color:#000;">Anita</span>
<span class="t" style="left:139.60px;top:361.00px;font-size:19.5px;line-height:24px;letter-spacing:-0.105px;color:#000;">Female</span>
<span class="t" style="left:234.40px;top:361.00px;font-size:19.5px;line-height:24px;letter-spacing:0.342px;color:#000;">Light Brown</span>
<span class="t" style="left:367.30px;top:361.00px;font-size:19.5px;line-height:24px;letter-spacing:0.398px;color:#000;">Short</span>
<span class="t" style="left:45.00px;top:391.00px;font-size:19.5px;line-height:24px;letter-spacing:0.051px;color:#000;">Chidera</span>
<span class="t" style="left:139.60px;top:391.00px;font-size:19.5px;line-height:24px;letter-spacing:0.877px;color:#000;">Male</span>
<span class="t" style="left:234.40px;top:391.00px;font-size:19.5px;line-height:24px;letter-spacing:-0.371px;color:#000;">Black</span>
<span class="t" style="left:367.30px;top:391.00px;font-size:19.5px;line-height:24px;letter-spacing:0.613px;color:#000;">Tall</span>
<div style="left:363px;top:386px;width:97px;height:32px;border:2px solid #217346;"></div>
<div style="left:456px;top:414px;width:6px;height:6px;background:#217346;border:1px solid #fff;"></div>
</div>
<div class="sec" id="vertical-scrollbar">
<div style="left:1105px;top:225px;width:15px;height:438px;background:#dadada;"></div>
<div style="left:1105px;top:210px;width:15px;height:15px;background:#fff;border:1px solid #b4b4b4;"></div>
<svg class="i" style="left:1109px;top:215px;" width="7" height="4" viewBox="0 0 7 4"><path d="M0 4 h7 l-3.500-4z" fill="#606060"/></svg>
<div style="left:1105px;top:225px;width:15px;height:262px;background:#fff;border:1px solid #ababab;"></div>
<div style="left:1105px;top:663px;width:15px;height:15px;background:#fff;border:1px solid #c8c8c8;"></div>
<svg class="i" style="left:1109px;top:669px;" width="7" height="4" viewBox="0 0 7 4"><path d="M0 0 h7 l-3.500 4z" fill="#606060"/></svg>
</div>
<div class="sec" id="sheet-tab-bar">
<div style="left:1px;top:678px;width:1122px;height:27px;background:#e6e6e6;"></div>
<svg class="i" style="left:28px;top:686px;" width="5" height="9" viewBox="0 0 5 9"><path d="M4.500 .5 v8 l-4-4z" fill="#c0c0c0"/></svg>
<svg class="i" style="left:57px;top:686px;" width="5" height="9" viewBox="0 0 5 9"><path d="M.5 .5 v8 l4-4z" fill="#c0c0c0"/></svg>
<div style="left:101px;top:677px;width:65px;height:25px;background:#fff;border-left:1px solid #ababab;border-right:1px solid #ababab;"></div>
<div style="left:101px;top:700px;width:65px;height:2px;background:#217346;"></div>
<span class="t" style="left:113.00px;top:683.00px;font-size:12.7px;line-height:16px;letter-spacing:-0.350px;color:#217346;font-weight:700;">Sheet1</span>
<svg class="i" style="left:198px;top:682px;" width="18" height="18" viewBox="0 0 18 18"><circle cx="8.800" cy="8.800" r="7.600" fill="none" stroke="#777" stroke-width="1.100"/><path d="M4.800 8.800 h8 M8.800 4.800 v8" stroke="#666" stroke-width="1.400"/></svg>
<div style="left:674px;top:686px;width:2px;height:2px;background:#a8a8a8;"></div>
<div style="left:674px;top:690px;width:2px;height:2px;background:#a8a8a8;"></div>
<div style="left:674px;top:694px;width:2px;height:2px;background:#a8a8a8;"></div>
<div style="left:691px;top:684px;width:15px;height:15px;background:#fff;border:1px solid #ababab;"></div>
<svg class="i" style="left:696px;top:688px;" width="5" height="8" viewBox="0 0 5 8"><path d="M4.500 0 v8 l-4.500-4z" fill="#555"/></svg>
<div style="left:706px;top:684px;width:338px;height:15px;background:#fff;border:1px solid #ababab;"></div>
<div style="left:1044px;top:684px;width:43px;height:15px;background:#dcdcdc;"></div>
<div style="left:1087px;top:684px;width:15px;height:15px;background:#fff;border:1px solid #ababab;"></div>
<svg class="i" style="left:1092px;top:688px;" width="5" height="8" viewBox="0 0 5 8"><path d="M.5 0 v8 l4.500-4z" fill="#555"/></svg>
</div>
<div class="sec" id="status-bar">
<div style="left:1px;top:705px;width:1122px;height:23px;background:#f3f2f1;"></div>
<div style="left:1px;top:705px;width:1122px;height:1px;background:#c8c8c8;"></div>
<div style="left:0px;top:727px;width:1124px;height:1px;background:#767676;"></div>
<span class="t" style="left:10.00px;top:709.00px;font-size:11.2px;line-height:14px;letter-spacing:-0.594px;color:#444;">Ready</span>
<span class="t" style="left:55.00px;top:709.00px;font-size:11.2px;line-height:14px;letter-spacing:0.270px;color:#444;">Workbook Statistics</span>
<svg class="i" style="left:177px;top:709px;" width="17" height="15" viewBox="0 0 17 15"><circle cx="7" cy="2.300" r="1.800" fill="none" stroke="#444" stroke-width="1"/><path d="M5 3.700 C3.200 3 1.200 2.400 1.200 3.800 C1.200 5 3 5 4.300 5.300 V10 C4.300 12 3.100 11.600 3.100 12.700 C3.100 13.700 4.500 13.700 5.200 13.200 M9 3.700 C10.800 3 12.800 2.400 12.800 3.800 C12.800 5 11 5 9.700 5.300 V8" fill="none" stroke="#444" stroke-width="1"/><path d="M7.400 10.500 L10.600 13.400 L15.900 8.200" fill="none" stroke="#444" stroke-width="1.100"/></svg>
<span class="t" style="left:196.50px;top:709.00px;font-size:11.2px;line-height:14px;letter-spacing:0.140px;color:#444;">Accessibility: Good to go</span>
<div style="left:812px;top:706px;width:40px;height:21px;background:#c8c8c8;"></div>
<svg class="i" style="left:825px;top:710px;" width="14" height="13" viewBox="0 0 14 13"><path d="M.5 .5 h12.500 v12 h-12.500z M.5 4.500 h12.500 M.5 8.500 h12.500 M4.700 .5 v12 M8.900 .5 v12" fill="none" stroke="#444" stroke-width="1"/></svg>
<svg class="i" style="left:865px;top:710px;" width="14" height="13" viewBox="0 0 14 13"><path d="M.5 .5 h12.500 v12 h-12.500z M3.500 3.500 h6.500 v6 h-6.500z M5 5.500 h3.500 M5 7.500 h3.500" fill="none" stroke="#444" stroke-width="1"/></svg>
<svg class="i" style="left:904px;top:709px;" width="15" height="14" viewBox="0 0 15 14"><path d="M.5 .5 h13.500 v13 h-13.500z M5.500 .5 v7 h8.500" fill="none" stroke="#444" stroke-width="1"/><path d="M8.500 .5 v7" fill="none" stroke="#444" stroke-width="1"/></svg>
<div style="left:938px;top:716px;width:8px;height:1px;background:#444;"></div>
<div style="left:951px;top:716px;width:100px;height:1px;background:#666;"></div>
<div style="left:1001px;top:713px;width:1px;height:7px;background:#666;"></div>
<div style="left:1007px;top:711px;width:5px;height:11px;background:#444;"></div>
<div style="left:1055px;top:716px;width:9px;height:1px;background:#444;"></div>
<div style="left:1059px;top:712px;width:1px;height:9px;background:#444;"></div>
<span class="t" style="left:1077.90px;top:709.00px;font-size:11.2px;line-height:14px;letter-spacing:-0.949px;color:#444;">148%</span>
</div>
<div class="sec" id="find-and-replace-dialog">
<div style="left:519px;top:292px;width:443px;height:194px;background:#f0f0f0;border:1px solid #4d4d4d;box-shadow:0 6px 16px rgba(0,0,0,.30),0 0 14px rgba(0,0,0,.16);"></div>
<div style="left:520px;top:293px;width:441px;height:30px;background:#fff;"></div>
<span class="t" style="left:527.80px;top:300.00px;font-size:12px;line-height:16px;letter-spacing:-0.258px;color:#000;">Find and Replace</span>
<span class="t" style="left:890.50px;top:300.00px;font-size:12.5px;line-height:16px;letter-spacing:0.000px;color:#000;">?</span>
<svg class="i" style="left:932.6px;top:302px;" width="11" height="11" viewBox="0 0 11 11"><path d="M.3 .3 L10.300 10.300 M10.300 .3 L.3 10.300" stroke="#111" stroke-width="1.100"/></svg>
<div style="left:526px;top:351px;width:427px;height:95px;background:#fff;border:1px solid #d9d9d9;"></div>
<div style="left:581px;top:332px;width:55px;height:20px;background:#f0f0f0;border:1px solid #d9d9d9;border-bottom:none;"></div>
<div style="left:526px;top:330px;width:56px;height:22px;background:#fff;border:1px solid #d9d9d9;border-bottom:none;"></div>
<span class="t" style="left:541.00px;top:334.50px;font-size:12px;line-height:16px;letter-spacing:-0.115px;color:#000;">Find</span>
<div style="left:558px;top:348px;width:6px;height:1px;background:#000;"></div>
<span class="t" style="left:588.00px;top:335.50px;font-size:12px;line-height:16px;letter-spacing:-0.671px;color:#000;">Replace</span>
<div style="left:601px;top:349px;width:6px;height:1px;background:#000;"></div>
<span class="t" style="left:535.40px;top:362.40px;font-size:12px;line-height:16px;letter-spacing:-0.118px;color:#000;">Find what:</span>
<div style="left:545px;top:376px;width:6px;height:1px;background:#000;"></div>
<div style="left:613px;top:361px;width:334px;height:20px;background:#fff;border:1px solid #7a7a7a;"></div>
<div style="left:616px;top:364px;width:19px;height:14px;background:#c8c8c8;"></div>
<span class="t" style="left:616.50px;top:362.40px;font-size:12px;line-height:16px;letter-spacing:-0.169px;color:#000;">Tall</span>
<div style="left:635px;top:364px;width:1px;height:14px;background:#000;"></div>
<div style="left:928px;top:362px;width:18px;height:18px;background:#e9e9e9;border:1px solid #adadad;"></div>
<svg class="i" style="left:932px;top:368px;" width="10" height="8" viewBox="0 0 10 8"><path d="M1.5 2.25 L5 5.75 L8.5 2.25" fill="none" stroke="#444" stroke-width="1.1"/></svg>
<div style="left:867px;top:414px;width:78px;height:22px;background:#e1e1e1;border:1px solid #adadad;"></div>
<span class="t" style="left:875.80px;top:417.00px;font-size:12px;line-height:16px;letter-spacing:0.022px;color:#000;">Options &gt;&gt;</span>
<div style="left:891px;top:431px;width:4px;height:1px;background:#000;"></div>
<div style="left:703px;top:455px;width:74px;height:22px;background:#e1e1e1;border:1px solid #adadad;"></div>
<span class="t" style="left:720.40px;top:457.60px;font-size:12px;line-height:16px;letter-spacing:-0.136px;color:#000;">Find All</span>
<div style="left:727px;top:471px;width:3px;height:1px;background:#000;"></div>
<div style="left:787px;top:455px;width:74px;height:22px;background:#e1e1e1;border:2px solid #0078d7;"></div>
<span class="t" style="left:799.00px;top:457.60px;font-size:12px;line-height:16px;letter-spacing:-0.294px;color:#000;">Find Next</span>
<div style="left:799px;top:471px;width:6px;height:1px;background:#000;"></div>
<div style="left:880px;top:455px;width:74px;height:22px;background:#e5f1fb;border:1px solid #0078d7;"></div>
<span class="t" style="left:903.60px;top:457.60px;font-size:12px;line-height:16px;letter-spacing:-0.945px;color:#000;">Close</span>
</div>
<div class="sec" id="annotation">
<div style="left:873px;top:447px;width:85px;height:37px;border:3.3px solid #000;border-radius:6px;"></div>
<svg class="i" style="left:740px;top:470px;" width="150" height="130" viewBox="0 0 150 130"><path d="M14.300 118.500 L121.600 21.600" stroke="#000" stroke-width="2.600" fill="none"/><path d="M131.900 13 L115.800 20 L121.600 21.600 L123.200 28.400z" fill="#000"/></svg>
<span class="t" style="left:654.80px;top:585.00px;font-size:26.5px;line-height:32px;letter-spacing:0.409px;color:#000;font-weight:700;-webkit-text-stroke:.8px #000;">Close</span>
<span class="t" style="left:737.60px;top:585.00px;font-size:26.5px;line-height:32px;letter-spacing:1.569px;color:#000;font-weight:700;-webkit-text-stroke:.8px #000;">Button</span>
<svg class="i" style="left:917px;top:476px;" width="14" height="21" viewBox="0 0 14 21"><path d="M.6 .8 V16.800 L4.200 13.400 L6.800 19.300 L9.300 18.200 L6.800 12.400 H11.800z" fill="#fff" stroke="#000" stroke-width="1" stroke-linejoin="miter"/></svg>
</div>
</div></body></html>
